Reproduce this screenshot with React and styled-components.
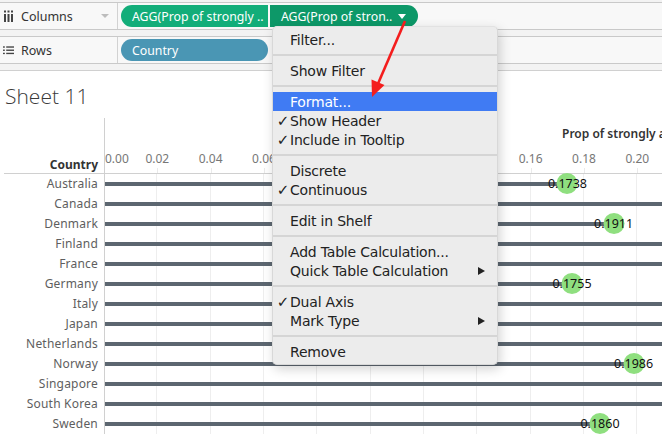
import styled, { createGlobalStyle } from "styled-components";

const GlobalStyle = createGlobalStyle`
  body {
    margin: 0;
    background: #ffffff;
  }
`;

const PX = 2666.67;

const countries = [
  { name: "Australia", value: 0.1738 },
  { name: "Canada", value: null },
  { name: "Denmark", value: 0.1911 },
  { name: "Finland", value: null },
  { name: "France", value: null },
  { name: "Germany", value: 0.1755 },
  { name: "Italy", value: null },
  { name: "Japan", value: null },
  { name: "Netherlands", value: null },
  { name: "Norway", value: 0.1986 },
  { name: "Singapore", value: null },
  { name: "South Korea", value: null },
  { name: "Sweden", value: 0.186 },
];

const ticks = [0, 0.02, 0.04, 0.06, 0.08, 0.1, 0.12, 0.14, 0.16, 0.18, 0.2];

const menu = [
  [{ label: "Filter..." }],
  [{ label: "Show Filter" }],
  [
    { label: "Format...", active: true },
    { label: "Show Header", checked: true },
    { label: "Include in Tooltip", checked: true },
  ],
  [{ label: "Discrete" }, { label: "Continuous", checked: true }],
  [{ label: "Edit in Shelf" }],
  [
    { label: "Add Table Calculation..." },
    { label: "Quick Table Calculation", sub: true },
  ],
  [{ label: "Dual Axis", checked: true }, { label: "Mark Type", sub: true }],
  [{ label: "Remove" }],
];

const Page = styled.div`
  position: relative;
  width: 662px;
  height: 434px;
  overflow: hidden;
  background: #fff;
  font-family: "Noto Sans", "Open Sans", sans-serif;
`;

const Shelves = styled.div`
  background: #f3f3f3;
  padding-top: 2px;
  display: flex;
  flex-direction: column;
  gap: 6px;
  padding-bottom: 6px;
`;

const ShelfRow = styled.div`
  display: flex;
  height: 26px;
  background: #f8f8f8;
  border-top: 1px solid #c9c9c9;
  border-bottom: 1px solid #c9c9c9;
`;

const ShelfLabel = styled.div`
  width: 118px;
  display: flex;
  align-items: center;
  gap: 7px;
  padding-left: 3px;
  box-sizing: border-box;
  border-right: 1px solid #d2d2d2;
  font-size: 12.5px;
  color: #333;
`;

const ShelfIcon = styled.span`
  width: 11px;
  display: flex;
  justify-content: center;
  color: #444;
`;

const ShelfCaret = styled.span`
  margin-left: auto;
  margin-right: 8px;
  width: 0;
  height: 0;
  border-left: 4px solid transparent;
  border-right: 4px solid transparent;
  border-top: 4px solid #bdbdbd;
`;

const PillTrack = styled.div`
  display: flex;
  align-items: center;
  gap: 2px;
  padding-left: 3px;
`;

const Pill = styled.div`
  height: 22px;
  width: ${(p) => p.$w}px;
  box-sizing: border-box;
  display: flex;
  align-items: center;
  padding: 0 10px 0 11px;
  background: ${(p) => p.$bg};
  color: #fff;
  font-size: 12.3px;
  white-space: nowrap;
  border-radius: ${(p) => p.$radius};
`;

const PillCaret = styled.span`
  margin-left: auto;
  margin-right: 2px;
  width: 0;
  height: 0;
  border-left: 4px solid transparent;
  border-right: 4px solid transparent;
  border-top: 5px solid #fff;
`;

const Sheet = styled.div`
  border-top: 1px solid #d0d0d0;
`;

const Title = styled.div`
  height: 47px;
  box-sizing: border-box;
  padding: 11px 0 0 5px;
  font-family: "Open Sans", "Noto Sans", sans-serif;
  font-weight: 300;
  font-size: 21px;
  line-height: 28px;
  color: #3a3a3a;
`;

const Chart = styled.div`
  margin-left: 4px;
`;

const HeaderRow = styled.div`
  display: grid;
  grid-template-columns: 100px 1fr;
  height: 55px;
  border-bottom: 1px solid #d0d0d0;
`;

const HeaderLabel = styled.div`
  display: flex;
  align-items: flex-end;
  justify-content: flex-end;
  padding: 0 6px 0 0;
  font-size: 12px;
  font-weight: 700;
  color: #333;
`;

const Axis = styled.div`
  position: relative;
  border-left: 1px solid #d0d0d0;
`;

const AxisTitle = styled.div`
  position: absolute;
  left: 457px;
  top: 7px;
  font-size: 12px;
  font-weight: 600;
  color: #333;
  white-space: nowrap;
`;

const Tick = styled.div`
  position: absolute;
  top: 32px;
  font-size: 12px;
  color: #777;
  transform: translateX(${(p) => (p.$first ? "1px" : "-50%")});
`;

const TickMark = styled.div`
  position: absolute;
  bottom: 0;
  width: 1px;
  height: 5px;
  background: #eaeaea;
`;

const Row = styled.div`
  display: grid;
  grid-template-columns: 100px 1fr;
  height: 20px;
`;

const RowLabel = styled.div`
  text-align: right;
  padding-right: 6px;
  font-size: 12px;
  line-height: 20px;
  letter-spacing: 0.2px;
  color: #5e5e5e;
  white-space: nowrap;
`;

const Pane = styled.div`
  position: relative;
  display: flex;
  align-items: center;
  border-left: 1px solid #d0d0d0;
  background: repeating-linear-gradient(
    to right,
    transparent 0 51.33px,
    #eeeeee 51.33px 52.33px,
    transparent 52.33px 53.33px
  );
`;

const Bar = styled.div`
  height: 4px;
  background: #5c6670;
`;

const Dot = styled.div`
  position: absolute;
  top: -1px;
  width: 21px;
  height: 21px;
  border-radius: 50%;
  background: #8fdf7f;
  transform: translateX(-50%);
  display: flex;
  justify-content: center;
`;

const DotLabel = styled.span`
  font-size: 12.5px;
  line-height: 21px;
  color: #111;
  white-space: nowrap;
`;

const Menu = styled.div`
  position: absolute;
  left: 272px;
  top: 26px;
  width: 226px;
  padding: 3px 0 3px;
  background: #ececec;
  border: 1px solid #d8d8d8;
  border-top-color: #e2e2e2;
  box-sizing: border-box;
  border-radius: 5px;
  box-shadow: 2px 4px 12px rgba(0, 0, 0, 0.18);
  font-family: "DejaVu Sans", "Noto Sans", sans-serif;
  font-size: 14px;
  letter-spacing: -0.2px;
  color: #222;
`;

const MenuSep = styled.div`
  height: 2px;
  margin: 5px 0 5px;
  background: #d5d5d5;
`;

const MenuItem = styled.div`
  display: flex;
  align-items: center;
  height: 19px;
  background: ${(p) => (p.$active ? "#407bf3" : "transparent")};
  color: ${(p) => (p.$active ? "#fff" : "#222")};
`;

const Check = styled.span`
  width: 17px;
  padding-right: 1px;
  box-sizing: border-box;
  text-align: right;
  font-size: 15px;
  color: #222;
`;

const ItemText = styled.span`
  white-space: nowrap;
`;

const SubArrow = styled.span`
  margin-left: auto;
  margin-right: 12px;
  width: 0;
  height: 0;
  border-top: 4.5px solid transparent;
  border-bottom: 4.5px solid transparent;
  border-left: 7px solid #222;
`;

const Overlay = styled.svg`
  position: absolute;
  left: 0;
  top: 0;
  pointer-events: none;
`;

function ColumnsIcon() {
  return (
    <svg width="11" height="12" viewBox="0 0 11 12">
      {[1, 4.5, 8].map((x) => (
        <g key={x} fill="#444">
          <rect x={x} y="0.5" width="2" height="2" />
          <rect x={x} y="4" width="2" height="8" />
        </g>
      ))}
    </svg>
  );
}

function RowsIcon() {
  return (
    <svg width="12" height="10" viewBox="0 0 12 10">
      {[1, 4.5, 8].map((y) => (
        <g key={y} fill="#444">
          <rect x="0" y={y} width="2" height="1.5" />
          <rect x="3.5" y={y} width="8.5" height="1.5" />
        </g>
      ))}
    </svg>
  );
}

function ChartRows() {
  return countries.map((c) => (
    <Row key={c.name}>
      <RowLabel>{c.name}</RowLabel>
      <Pane>
        <Bar style={{ width: c.value ? `${c.value * PX - 1}px` : "100%" }} />
        {c.value && (
          <Dot style={{ left: `${c.value * PX - 1}px` }}>
            <DotLabel>{c.value.toFixed(4)}</DotLabel>
          </Dot>
        )}
      </Pane>
    </Row>
  ));
}

function ContextMenu() {
  return (
    <Menu>
      {menu.map((group, gi) => (
        <div key={gi}>
          {gi > 0 && <MenuSep />}
          {group.map((item) => (
            <MenuItem key={item.label} $active={item.active}>
              <Check>{item.checked ? "✓" : ""}</Check>
              <ItemText>{item.label}</ItemText>
              {item.sub && <SubArrow />}
            </MenuItem>
          ))}
        </div>
      ))}
    </Menu>
  );
}

export default function App() {
  return (
    <Page>
      <GlobalStyle />
      <Shelves>
        <ShelfRow>
          <ShelfLabel>
            <ShelfIcon>
              <ColumnsIcon />
            </ShelfIcon>
            Columns
            <ShelfCaret />
          </ShelfLabel>
          <PillTrack>
            <Pill $w={147} $bg="#12ad79" $radius="11px 0 0 11px">
              AGG(Prop of strongly ..
            </Pill>
            <Pill $w={148} $bg="#0d9868" $radius="0 11px 11px 0">
              AGG(Prop of stron..
              <PillCaret />
            </Pill>
          </PillTrack>
        </ShelfRow>
        <ShelfRow>
          <ShelfLabel>
            <ShelfIcon>
              <RowsIcon />
            </ShelfIcon>
            Rows
          </ShelfLabel>
          <PillTrack>
            <Pill $w={147} $bg="#4a96b4" $radius="11px">
              Country
            </Pill>
          </PillTrack>
        </ShelfRow>
      </Shelves>

      <Sheet>
        <Title>Sheet 11</Title>
        <Chart>
          <HeaderRow>
            <HeaderLabel>Country</HeaderLabel>
            <Axis>
              <AxisTitle>Prop of strongly agree</AxisTitle>
              {ticks.map((t, i) => (
                <Tick key={t} $first={i === 0} style={{ left: `${t * PX - 1}px` }}>
                  {t.toFixed(2)}
                </Tick>
              ))}
              {ticks.slice(1).map((t) => (
                <TickMark key={t} style={{ left: `${t * PX - 1}px` }} />
              ))}
            </Axis>
          </HeaderRow>
          <ChartRows />
        </Chart>
      </Sheet>

      <ContextMenu />

      <Overlay width="662" height="434">
        <line x1="405" y1="21" x2="377" y2="86" stroke="#f41d1d" strokeWidth="2.6" />
        <polygon points="372,97 384.5,85 371.5,79.5" fill="#f41d1d" />
      </Overlay>
    </Page>
  );
}
